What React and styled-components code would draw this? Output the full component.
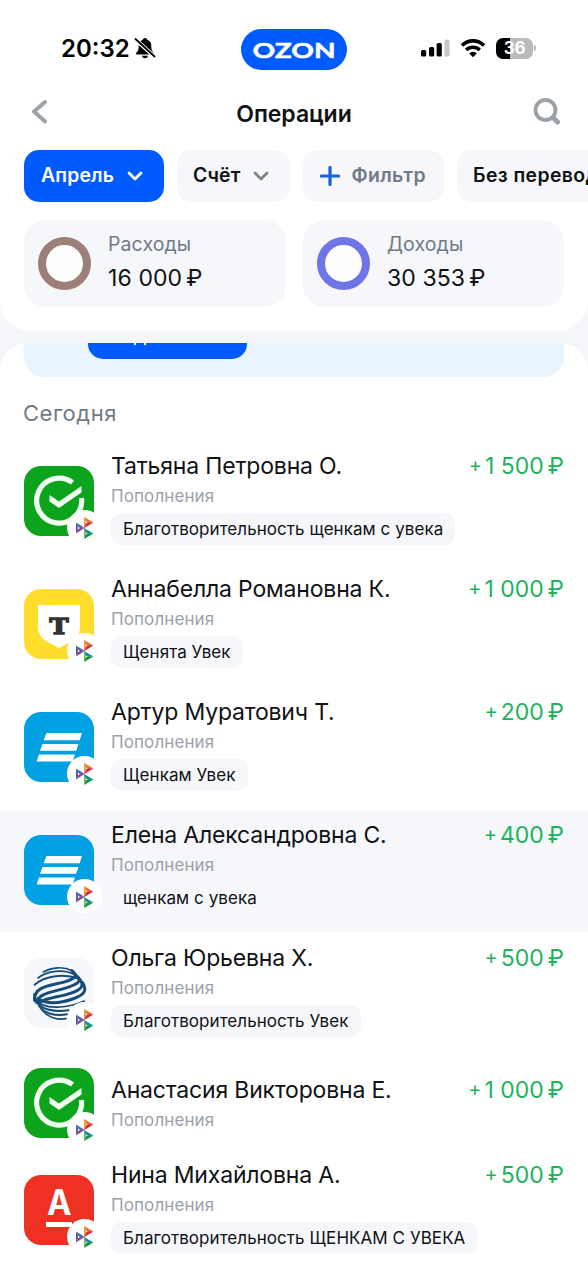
import React from "react";
import styled, { createGlobalStyle } from "styled-components";

const GlobalStyle = createGlobalStyle`
  * {
    box-sizing: border-box;
  }

  body {
    margin: 0;
    background: #f5f6fa;
    color: #101216;
    font-family: Inter, "Noto Sans", sans-serif;
    font-size: 23px;
    overflow: hidden;
  }
`;

const Screen = styled.div`
  display: flex;
  flex-direction: column;
  width: 588px;
  height: 1280px;
  overflow: hidden;
`;

const TopCard = styled.header`
  flex: none;
  height: 331px;
  border-radius: 0 0 30px 30px;
  background: #fff;
`;

const StatusBar = styled.div`
  display: grid;
  grid-template-columns: 1fr 106px 1fr;
  align-items: start;
  height: 70px;
  padding-top: 29px;
`;

const Clock = styled.div`
  display: flex;
  align-items: center;
  gap: 4px;
  height: 38px;
  padding-left: 61px;
  color: #000;
  font-size: 24px;
  font-weight: 600;
`;

const Brand = styled.div`
  display: flex;
  align-items: center;
  justify-content: center;
  height: 41px;
  border-radius: 21px;
  background: #005bff;
`;

const Signals = styled.div`
  display: flex;
  align-items: center;
  height: 38px;
  padding-left: 74px;
`;

const Battery = styled.div`
  display: flex;
  align-items: center;
  justify-content: center;
  width: 37px;
  height: 21px;
  margin-left: 10px;
  border-radius: 7px;
  background: linear-gradient(90deg, #000 37%, #bababa 37%);
  color: #fff;
  font-size: 17px;
  font-weight: 700;
  letter-spacing: -0.3px;
`;

const BatteryTip = styled.span`
  width: 2px;
  height: 6px;
  margin-left: 1px;
  border-radius: 0 2px 2px 0;
  background: #bababa;
`;

const TitleBar = styled.div`
  display: grid;
  grid-template-columns: 1fr auto 1fr;
  align-items: center;
  height: 80px;
  padding: 4px 27px 0 30px;

  & > :last-child {
    justify-self: end;
  }
`;

const Title = styled.h1`
  margin: 3px 3px 0 0;
  font-size: 23px;
  font-weight: 600;
  letter-spacing: -0.05px;
`;

const Filters = styled.div`
  display: flex;
  gap: 13px;
  height: 52px;
  padding-left: 24px;
  overflow: hidden;
`;

const FilterChip = styled.button`
  display: flex;
  flex: none;
  align-items: center;
  justify-content: space-between;
  width: ${({ $width }) => $width}px;
  padding: 0 ${({ $muted }) => ($muted ? 18 : 21)}px 3px
    ${({ $active, $muted }) => ($active || $muted ? 17 : 16)}px;
  border: none;
  border-radius: 15px;
  background: ${({ $active }) => ($active ? "#005bff" : "#f5f7fa")};
  color: ${({ $active, $muted }) =>
    $active ? "#fff" : $muted ? "#707a86" : "#101216"};
  font-family: inherit;
  font-size: 19.4px;
  font-weight: 600;
  letter-spacing: ${({ $muted, $spaced }) =>
    $muted || $spaced ? "0.4px" : "0.15px"};
  white-space: nowrap;

  & > svg {
    margin-top: 3px;
  }
`;

const Summary = styled.div`
  display: grid;
  grid-template-columns: 262px 261px;
  gap: 17px;
  padding: 18px 24px 0;
`;

const SummaryCard = styled.section`
  display: flex;
  align-items: center;
  gap: 17px;
  height: 87px;
  padding: 0 14px;
  border-radius: 22px;
  background: #f5f7fa;
`;

const Ring = styled.div`
  width: 53px;
  height: 53px;
  border: 8px solid ${({ $color }) => $color};
  border-radius: 50%;
  background: #fdfdfe;
`;

const SummaryLabel = styled.div`
  color: #707a86;
  font-size: 19.5px;
  line-height: 24px;
  letter-spacing: 0.1px;
`;

const SummaryValue = styled.div`
  display: flex;
  gap: 4px;
  margin-top: 5px;
  padding-bottom: 1px;
  line-height: 34px;
  letter-spacing: 0.1px;
`;

const Backdrop = styled.div`
  flex: none;
  height: 12px;
`;

const List = styled.main`
  flex: 1;
  border-radius: 28px 28px 0 0;
  background: #fff;
`;

const Banner = styled.div`
  display: flex;
  height: 34px;
  margin: 0 24px;
  padding-left: 64px;
  border-radius: 0 0 20px 20px;
  background: #e8f5ff;
`;

const BannerButton = styled.div`
  display: flex;
  align-items: flex-end;
  justify-content: center;
  width: 159px;
  height: 16px;
  padding: 0 56px 0 0;
  border-radius: 0 0 15px 15px;
  background: #005bff;
  overflow: hidden;
`;

const DescenderTip = styled.span`
  width: 12px;
  height: 2px;
  margin-bottom: 14px;
  border: solid #fff;
  border-width: 0 2px;
`;

const DayTitle = styled.h2`
  height: 64px;
  margin: 0;
  padding: 21px 23px 0;
  color: #707a86;
  font-size: 22px;
  font-weight: 400;
  line-height: 31px;
  letter-spacing: 0.5px;
`;

const Row = styled.article`
  display: flex;
  align-items: ${({ $compact }) => ($compact ? "center" : "flex-start")};
  height: ${({ $compact }) => ($compact ? 93 : 122)}px;
  margin-bottom: 1px;
  padding: ${({ $compact }) => ($compact ? "1px" : "11px")} 24px 0;
  background: ${({ $pressed }) => ($pressed ? "#f5f7fa" : "transparent")};
`;

const Avatar = styled.div`
  position: relative;
  flex: none;
  width: 70px;
  height: 70px;
  margin: ${({ $compact }) => ($compact ? 0 : 14)}px 17px 0 0;
`;

const TransferBadge = styled.span`
  position: absolute;
  left: 43px;
  top: 44px;
  display: flex;
  align-items: center;
  justify-content: center;
  width: 35px;
  height: 35px;
  border-radius: 50%;
  background: #fff;
`;

const Details = styled.div`
  flex: 1;
  padding-top: ${({ $compact }) => ($compact ? 5 : 0)}px;
`;

const RowHead = styled.div`
  display: flex;
  justify-content: space-between;
  height: 28px;
  line-height: 28px;
`;

const Person = styled.span`
  letter-spacing: -0.18px;
  white-space: nowrap;
`;

const Amount = styled.span`
  display: flex;
  align-items: center;
  gap: 4px;
  color: #1eb35b;
  white-space: nowrap;
`;

const Plus = styled.span`
  margin: -2px -1px 0 0;
  font-size: 20px;
`;

const Category = styled.div`
  height: 32px;
  color: #9ba2ac;
  font-size: 17px;
  line-height: 32px;
  letter-spacing: 0.1px;
`;

const Note = styled.div`
  width: fit-content;
  height: 32px;
  margin-top: 1px;
  padding: 0 12px;
  border-radius: 10px;
  background: #f5f7fa;
  font-size: 17px;
  line-height: 32px;
  letter-spacing: 0.06px;
  white-space: nowrap;
`;

const Chevron = ({ color }) => (
  <svg width="16" height="10" viewBox="0 0 16 10" fill="none">
    <path
      d="M2 2l6 6 6-6"
      stroke={color}
      strokeWidth="2.8"
      strokeLinecap="round"
      strokeLinejoin="round"
    />
  </svg>
);

const BellOff = () => (
  <svg width="22" height="22" viewBox="0 0 22 22">
    <path
      d="M11 1c1.2 0 2 .8 2.2 1.8 2.7.9 4.1 3.3 4.1 6.2 0 4 .7 5.2 2.4 6.8.7.8.3 1.7-.7 1.7H3c-1 0-1.4-.9-.7-1.7C4 14.2 4.7 13 4.7 9c0-2.9 1.4-5.3 4.1-6.2C9 1.8 9.8 1 11 1z"
      fill="#000"
    />
    <path d="M8 18.7h6c-.3 1.7-1.5 2.5-3 2.5s-2.7-.8-3-2.5z" fill="#000" />
    <path d="M1 2l20 18" stroke="#fff" strokeWidth="4" />
    <path d="M1.5 2l19 17.5" stroke="#000" strokeWidth="1.8" strokeLinecap="round" />
  </svg>
);

const Wordmark = styled.svg`
  overflow: visible;
`;

const OzonLogo = () => (
  <Wordmark width="84" height="24" viewBox="0 0 84 24">
    <text
      x="0.5"
      y="20"
      fill="#fff"
      stroke="#fff"
      strokeWidth="0.5"
      fontFamily="Lato, sans-serif"
      fontSize="21.5"
      fontWeight="700"
      textLength="83"
      lengthAdjust="spacingAndGlyphs"
    >
      OZON
    </text>
  </Wordmark>
);

const Cellular = () => (
  <svg width="29" height="18" viewBox="0 0 29 18">
    <rect x="0" y="11" width="5.2" height="6.5" rx="1.5" />
    <rect x="8" y="8" width="5.2" height="9.5" rx="1.5" />
    <rect x="15.6" y="4" width="5.2" height="13.5" rx="1.5" />
    <rect x="23.4" y="0.5" width="5.2" height="17" rx="1.5" fill="#c8c8c8" />
  </svg>
);

const WifiGlyph = styled.svg`
  margin-left: 10px;
`;

const Wifi = () => (
  <WifiGlyph width="26" height="20" viewBox="0 0 26 20" fill="none">
    <path d="M2 7.5a15.5 15.5 0 0 1 22 0" stroke="#000" strokeWidth="3.6" />
    <path d="M6.2 12a9.7 9.7 0 0 1 13.6 0" stroke="#000" strokeWidth="3.4" />
    <path d="M13 19.3l-3.8-3.9a5.4 5.4 0 0 1 7.6 0z" fill="#000" />
  </WifiGlyph>
);

const BackIcon = () => (
  <svg width="17" height="26" viewBox="0 0 17 26" fill="none">
    <path
      d="M15 3L4 12.5 15 22.5"
      stroke="#9ba2a8"
      strokeWidth="4"
      strokeLinecap="round"
      strokeLinejoin="round"
    />
  </svg>
);

const SearchIcon = () => (
  <svg width="28" height="28" viewBox="0 0 28 28" fill="none" stroke="#9aa1a7">
    <circle cx="12.5" cy="12" r="10" strokeWidth="3.8" />
    <path d="M20 19.5l4.5 4.5" strokeWidth="5" strokeLinecap="round" />
  </svg>
);

const PlusIcon = () => (
  <svg width="20" height="20" viewBox="0 0 20 20">
    <path d="M10 1.5v17M1.5 10h17" stroke="#1763dd" strokeWidth="3.2" strokeLinecap="round" />
  </svg>
);

const FastPayments = () => (
  <svg width="19" height="22" viewBox="0 0 19 22">
    <path d="M1 5.5v11l3.2-5.5z" fill="#5b57a6" />
    <path d="M1 5.5l8.5 5.2-5.3.3z" fill="#4668ab" />
    <path d="M1 16.5l8.5-5.5-5.3-.4z" fill="#8d4b82" />
    <path d="M9 0l2.6 5.5L9 11z" fill="#f0a32c" />
    <path d="M9 0l9.5 5.5h-6.9z" fill="#e9752e" />
    <path d="M18.5 5.5L9 11.200l2.600-6.200z" fill="#d22e4a" />
    <path d="M9 11l2.600 5.500L9 22z" fill="#78b94a" />
    <path d="M8.500 10.700l10 5.800h-6.900z" fill="#1687ad" />
    <path d="M18.500 16.500L9 22l2.600-6z" fill="#10934c" />
    <circle cx="3.600" cy="11" r="0.900" fill="#fff" />
    <circle cx="11.600" cy="5.500" r="0.800" fill="#fff" />
    <circle cx="11.600" cy="16.500" r="0.800" fill="#fff" />
  </svg>
);

const Sber = () => (
  <svg width="70" height="70" viewBox="0 0 70 70" fill="none">
    <rect width="70" height="70" rx="17" fill="#0ca31d" />
    <path
      d="M48.500 16.500A22.500 22.500 0 1 0 57.500 32"
      stroke="#effff0"
      strokeWidth="5.2"
    />
    <path d="M25.500 29l9.500 6.500L57.500 20v6.500L35 42l-9.500-6.500z" fill="#effff0" />
  </svg>
);

const TBank = () => (
  <svg width="70" height="70" viewBox="0 0 70 70">
    <rect width="70" height="70" rx="17" fill="#ffdd2d" />
    <path d="M14 16h42v22c0 7-3.5 11.5-9 14.5L35 59l-12-6.5c-5.5-3-9-7.5-9-14.5z" fill="#fff" />
    <text
      x="25.5"
      y="44.5"
      fill="#333"
      stroke="#333"
      strokeWidth="1.5"
      fontFamily="DejaVu Serif, serif"
      fontSize="22.5"
      fontWeight="700"
      textLength="19"
      lengthAdjust="spacingAndGlyphs"
    >
      Т
    </text>
  </svg>
);

const Stripes = () => (
  <svg width="70" height="70" viewBox="0 0 70 70">
    <rect width="70" height="70" rx="17" fill="#00a0e3" />
    <path
      d="M22.5 21H58l-2.3 7.200H19.600zM18.500 32h36l-2.300 6.800H16zM15 42.500h36L48.700 49.500H12.500z"
      fill="#fff"
    />
  </svg>
);

const Globe = () => (
  <svg width="70" height="70" viewBox="6 0 210 210" fill="none">
    <rect x="6" width="210" height="210" rx="51" fill="#f5f7fa" />
    <g stroke="#164c78" strokeLinecap="round">
      <path d="M64 42C90 27 125 25 150 38" strokeWidth="5" />
      <path d="M48 60C75 38 125 32 158 50" strokeWidth="5" />
      <path d="M38 80C65 56 120 44 170 62" strokeWidth="6" />
      <path d="M38 128C32 82 95 82 130 71S166 52 150 38" strokeWidth="9" />
      <path d="M44 134C50 104 95 102 135 89S180 66 160 50" strokeWidth="9" />
      <path d="M50 134C78 118 110 118 145 106S190 82 170 60" strokeWidth="9" />
      <path d="M48 122C80 142 120 134 152 123S198 100 182 74" strokeWidth="9" />
      <path d="M36 108C40 140 75 150 115 147S172 136 187 129" strokeWidth="5" />
      <path d="M42 126C52 154 95 163 140 157" strokeWidth="6" />
      <path d="M50 142C64 166 100 176 136 169" strokeWidth="6" />
      <path d="M60 156C80 181 110 186 132 182" strokeWidth="5" />
    </g>
  </svg>
);

const Alfa = () => (
  <svg width="70" height="70" viewBox="0 0 70 70">
    <rect width="70" height="70" rx="17" fill="#ef3124" />
    <text
      x="23"
      y="39.5"
      fill="#fff"
      fontFamily="Inter, sans-serif"
      fontSize="35"
      fontWeight="700"
      textLength="24.5"
      lengthAdjust="spacingAndGlyphs"
    >
      А
    </text>
    <rect x="22" y="47" width="26" height="5" fill="#fff" />
  </svg>
);

const operations = [
  {
    name: "Татьяна Петровна О.",
    amount: "1 500",
    note: "Благотворительность щенкам с увека",
    Logo: Sber,
  },
  {
    name: "Аннабелла Романовна К.",
    amount: "1 000",
    note: "Щенята Увек",
    Logo: TBank,
  },
  {
    name: "Артур Муратович Т.",
    amount: "200",
    note: "Щенкам Увек",
    Logo: Stripes,
  },
  {
    name: "Елена Александровна С.",
    amount: "400",
    note: "щенкам с увека",
    Logo: Stripes,
    pressed: true,
  },
  {
    name: "Ольга Юрьевна Х.",
    amount: "500",
    note: "Благотворительность Увек",
    Logo: Globe,
  },
  { name: "Анастасия Викторовна Е.", amount: "1 000", Logo: Sber },
  {
    name: "Нина Михайловна А.",
    amount: "500",
    note: "Благотворительность ЩЕНКАМ С УВЕКА",
    Logo: Alfa,
  },
];

const Operation = ({ name, amount, note, Logo, pressed }) => (
  <Row $compact={!note} $pressed={pressed}>
    <Avatar $compact={!note}>
      <Logo />
      <TransferBadge>
        <FastPayments />
      </TransferBadge>
    </Avatar>
    <Details $compact={!note}>
      <RowHead>
        <Person>{name}</Person>
        <Amount>
          <Plus>+</Plus>
          <span>{amount}</span>
          <span>₽</span>
        </Amount>
      </RowHead>
      <Category>Пополнения</Category>
      {note && <Note>{note}</Note>}
    </Details>
  </Row>
);

const Total = ({ label, value, color }) => (
  <SummaryCard>
    <Ring $color={color} />
    <div>
      <SummaryLabel>{label}</SummaryLabel>
      <SummaryValue>
        <span>{value}</span>
        <span>₽</span>
      </SummaryValue>
    </div>
  </SummaryCard>
);

export default function App() {
  return (
    <Screen>
      <GlobalStyle />
      <TopCard>
        <StatusBar>
          <Clock>
            20:32
            <BellOff />
          </Clock>
          <Brand>
            <OzonLogo />
          </Brand>
          <Signals>
            <Cellular />
            <Wifi />
            <Battery>36</Battery>
            <BatteryTip />
          </Signals>
        </StatusBar>
        <TitleBar>
          <BackIcon />
          <Title>Операции</Title>
          <SearchIcon />
        </TitleBar>
        <Filters>
          <FilterChip $active $width={140}>
            Апрель
            <Chevron color="#fff" />
          </FilterChip>
          <FilterChip $width={113}>
            Счёт
            <Chevron color="#7a828c" />
          </FilterChip>
          <FilterChip $muted $width={141}>
            <PlusIcon />
            Фильтр
          </FilterChip>
          <FilterChip $spaced $width={186}>
            Без переводов
          </FilterChip>
        </Filters>
        <Summary>
          <Total label="Расходы" value="16 000" color="#9b7f78" />
          <Total label="Доходы" value="30 353" color="#6f74e6" />
        </Summary>
      </TopCard>
      <Backdrop />
      <List>
        <Banner>
          <BannerButton>
            <DescenderTip />
          </BannerButton>
        </Banner>
        <DayTitle>Сегодня</DayTitle>
        {operations.map((operation) => (
          <Operation key={operation.name} {...operation} />
        ))}
      </List>
    </Screen>
  );
}
